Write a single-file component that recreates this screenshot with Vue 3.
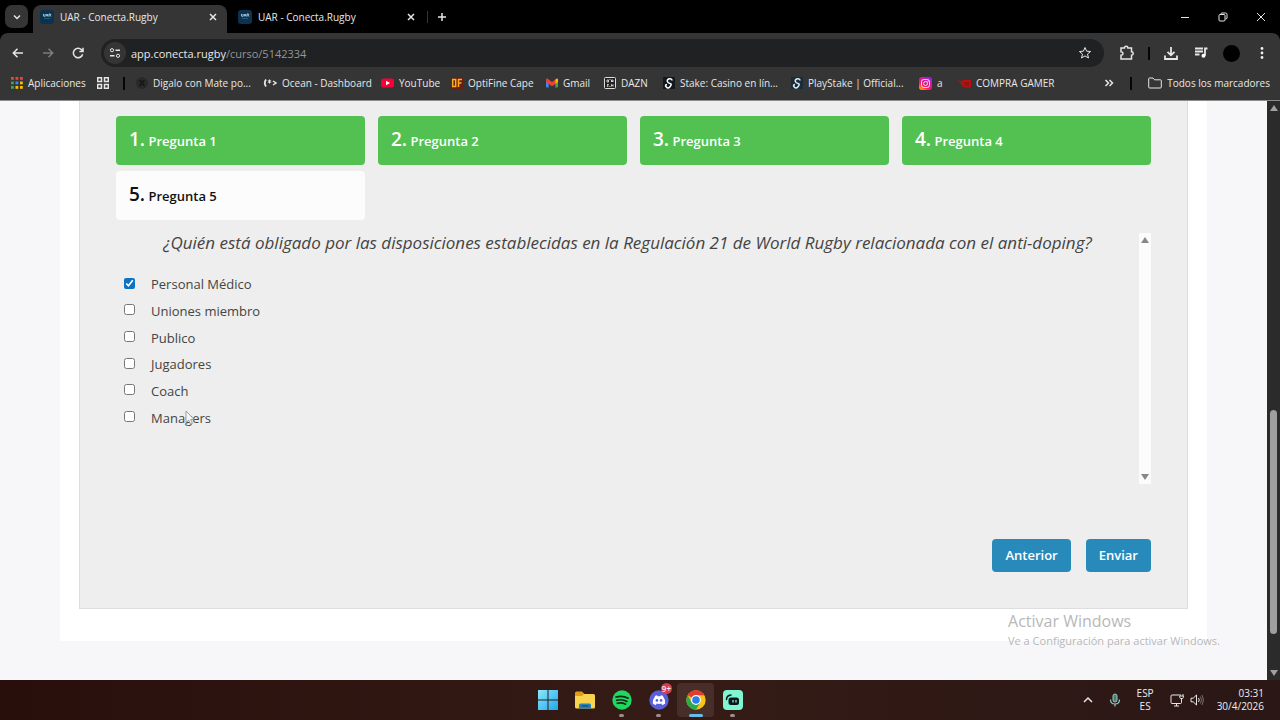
<script setup>
import { ref } from 'vue'

const tabs = [
  { id: 1, title: 'UAR - Conecta.Rugby', active: true },
  { id: 2, title: 'UAR - Conecta.Rugby', active: false }
]

const questions = [
  { n: 1, done: true },
  { n: 2, done: true },
  { n: 3, done: true },
  { n: 4, done: true },
  { n: 5, done: false }
]

const options = ref([
  { label: 'Personal Médico', checked: true },
  { label: 'Uniones miembro', checked: false },
  { label: 'Publico', checked: false },
  { label: 'Jugadores', checked: false },
  { label: 'Coach', checked: false },
  { label: 'Managers', checked: false }
])

const appDots = ['#e8453c', '#e8453c', '#e8453c', '#34a853', '#4285f4', '#fbbc05', '#34a853', '#fbbc05', '#fbbc05']
</script>

<template>
  <div class="desktop">
    <header class="browser">
      <div class="tabstrip">
        <button class="tab-search" aria-label="Buscar pestañas">
          <svg width="10" height="10" viewBox="0 0 10 10"><path d="M2 3.5l3 3 3-3" class="line bold" /></svg>
        </button>
        <div v-for="t in tabs" :key="t.id" class="tab" :class="{ active: t.active }">
          <svg class="favicon" width="14" height="14" viewBox="0 0 14 14">
            <rect width="14" height="14" rx="3" fill="#0b3350" />
            <path d="M3.5 4v1.6q0 .8.8.8t.8-.8V4M6 6.5L7 4l1 2.500M9 6.500V4h1q.8 0 .8.7t-.8.7l.9 1.100" fill="none" stroke="#dcebf5" stroke-width=".8" />
            <path d="M4 8.500h6" stroke="#2d6d94" stroke-width=".7" />
          </svg>
          <span class="tab-title">{{ t.title }}</span>
          <button class="tab-close" aria-label="Cerrar">
            <svg width="10" height="10" viewBox="0 0 10 10"><path d="M2 2l6 6M8 2l-6 6" class="line bold" /></svg>
          </button>
        </div>
        <span class="tab-sep"></span>
        <button class="new-tab" aria-label="Nueva pestaña">
          <svg width="10" height="10" viewBox="0 0 10 10"><path d="M5 1v8M1 5h8" class="line bold" /></svg>
        </button>
        <div class="win-controls">
          <button aria-label="Minimizar"><svg width="10" height="10" viewBox="0 0 10 10"><path d="M1 5.500h8" class="line" /></svg></button>
          <button aria-label="Restaurar"><svg width="10" height="10" viewBox="0 0 10 10"><rect x="1" y="2.500" width="6" height="6.500" rx="1" class="line" /><path d="M3 2.500V1.800Q3 1 4 1h3.500Q9 1 9 2.500V6q0 1-1.500 1" class="line" /></svg></button>
          <button aria-label="Cerrar ventana"><svg width="10" height="10" viewBox="0 0 10 10"><path d="M1 1l8 8M9 1l-8 8" class="line" /></svg></button>
        </div>
      </div>

      <div class="toolbar">
        <button class="nav" aria-label="Atrás"><svg width="14" height="14" viewBox="0 0 14 14"><path d="M12 7H2.500M6.500 2.800L2.300 7l4.200 4.200" class="line bold" /></svg></button>
        <button class="nav dim" aria-label="Adelante"><svg width="14" height="14" viewBox="0 0 14 14"><path d="M2 7h9.500M7.500 2.800L11.700 7l-4.200 4.200" class="line bold" /></svg></button>
        <button class="nav" aria-label="Recargar"><svg width="14" height="14" viewBox="0 0 14 14"><path d="M11.600 8.200A4.700 4.700 0 1 1 10.500 3.800L11.800 5.200M12 1.800v3.600H8.400" class="line bold" /></svg></button>
        <div class="omnibox">
          <button class="site-info" aria-label="Información del sitio">
            <svg width="12" height="12" viewBox="0 0 12 12"><circle cx="3" cy="3.200" r="1.600" class="line" /><path d="M6.500 3.200H11M1 8.800h4.500" class="line bold" /><circle cx="9" cy="8.800" r="1.600" class="line" /></svg>
          </button>
          <span class="url">app.conecta.rugby<span class="path">/curso/5142334</span></span>
          <button class="star" aria-label="Agregar a marcadores"><svg width="14" height="14" viewBox="0 0 14 14"><path d="M7 1.500l1.600 3.700 4 .3-3.100 2.600 1 3.900L7 9.900 3.500 12l1-3.900L1.400 5.500l4-.3z" class="line" /></svg></button>
        </div>
        <div class="tools">
          <button aria-label="Extensiones"><svg width="16" height="16" viewBox="0 0 16 16"><path d="M2 3h3.500a1.700 1.700 0 0 1 3.400 0H12.500V6.800a1.700 1.700 0 0 1 0 3.400V14H2v-3.800q2-.2 2-1.700T2 6.800z" class="line bold" /></svg></button>
          <span class="divider"></span>
          <button aria-label="Descargas"><svg width="16" height="16" viewBox="0 0 16 16"><path d="M8 2v8M4.500 6.800L8 10.300l3.500-3.500M2 10.500V14h12v-3.500" class="line heavy" /></svg></button>
          <button aria-label="Multimedia"><svg width="16" height="16" viewBox="0 0 16 16"><path d="M2 3.500h8M2 6.500h8M2 9.500h4.500M12 10.500V3.500h2.500" class="line heavy" /><circle cx="10.500" cy="10.800" r="2" fill="#fff" /></svg></button>
          <button aria-label="Perfil"><span class="avatar"></span></button>
          <button aria-label="Menú"><svg width="16" height="16" viewBox="0 0 16 16" fill="#eee"><circle cx="8" cy="3.500" r="1.400" /><circle cx="8" cy="8" r="1.400" /><circle cx="8" cy="12.500" r="1.400" /></svg></button>
        </div>
      </div>

      <nav class="bookmarks">
        <a href="#"><svg width="12" height="12" viewBox="0 0 12 12"><rect v-for="(c, i) in appDots" :key="i" :x="(i % 3) * 4.500" :y="Math.floor(i / 3) * 4.500" width="2.800" height="2.800" :fill="c" /></svg>Aplicaciones</a>
        <a href="#" aria-label="Grupos"><svg width="12" height="12" viewBox="0 0 12 12"><path d="M.7.7h3.800v3.800H.7zM7.500.7h3.800v3.800H7.500zM.7 7.500h3.800v3.800H.7zM7.500 7.500h3.800v3.800H7.500z" class="line bold" /></svg></a>
        <span class="divider"></span>
        <a href="#"><svg width="12" height="12" viewBox="0 0 12 12"><circle cx="6" cy="6" r="6" fill="#292929" /><path d="M3.500 3l2.500 3 2.500-3M3.500 9L6 6l2.500 3" fill="none" stroke="#161616" stroke-width="1.500" /></svg>Digalo con Mate po...</a>
        <a href="#"><svg width="14" height="12" viewBox="0 0 14 12"><path d="M3 2.500q-2.500 3.500 0 7" class="line heavy" /><path d="M6.500 2.500v4M4.800 3.500l3.400 2M8.200 3.500l-3.400 2" class="line" /><path d="M10 4l3 2-3 2" class="line bold" /></svg>Ocean - Dashboard</a>
        <a href="#"><svg width="13" height="12" viewBox="0 0 13 12"><rect y="1.500" width="13" height="9" rx="2.500" fill="#f50038" /><path d="M5 3.800L9 6 5 8.200z" fill="#fff" /></svg>YouTube</a>
        <a href="#"><svg width="12" height="12" viewBox="0 0 12 12"><rect width="12" height="12" fill="#651f12" /><path d="M1.700 2.500h3v7h-3zM7.500 10V2.500h3.500M7.500 6h3" fill="none" stroke="#ffae1c" stroke-width="1.500" /></svg>OptiFine Cape</a>
        <a href="#"><svg width="12" height="12" viewBox="0 0 12 12"><path d="M0 3h2.700v7.500H1q-1 0-1-1z" fill="#4285f4" /><path d="M9.300 3H12v6.500q0 1-1 1H9.300z" fill="#34a853" /><path d="M9.300 2.500Q12 .5 12 3v2L9.300 7z" fill="#fbbc04" /><path d="M0 3q0-2.500 2.700-.5L6 5l3.300-2.500V7L6 9.300 2.700 7 0 5z" fill="#ea4335" /></svg>Gmail</a>
        <a href="#"><svg width="12" height="12" viewBox="0 0 12 12"><rect x=".5" y=".5" width="11" height="11" rx="1" fill="#222" stroke="#ddd" /><path d="M3 3h1.500v2H3zM7.500 5V3h1.500v2M7.500 4.500H9M3 7.500h1.500L3 9.300h1.500M7.500 9.500v-2L9 9.300V7.300M6 2v1M6 9v1" fill="none" stroke="#ddd" stroke-width=".9" /></svg>DAZN</a>
        <a href="#"><svg width="12" height="12" viewBox="0 0 12 12"><rect width="12" height="12" fill="#11191f" /><path d="M9 3.500Q8.800 1.500 6.500 1.800 4 2.200 4.300 4.200T7 6.500t0 3.300-4.500-1Q2.500 7.500 4 7.500" fill="none" stroke="#fff" stroke-width="1.500" /></svg>Stake: Casino en lín...</a>
        <a href="#"><svg width="12" height="12" viewBox="0 0 12 12"><rect width="12" height="12" fill="#1a2c38" /><path d="M9 3.500Q8.800 1.500 6.500 1.800 4 2.200 4.300 4.200T7 6.500t0 3.300-4.500-1Q2.500 7.500 4 7.500" fill="none" stroke="#dcebf2" stroke-width="1.500" /></svg>PlayStake | Official...</a>
        <a href="#">
          <svg width="13" height="13" viewBox="0 0 13 13">
            <defs><linearGradient id="insta" x1="0" y1="1" x2=".7" y2="0"><stop offset="0" stop-color="#ffc400" /><stop offset=".4" stop-color="#ff1764" /><stop offset="1" stop-color="#a31be8" /></linearGradient></defs>
            <rect width="13" height="13" rx="3" fill="url(#insta)" /><rect x="2.500" y="2.500" width="8" height="8" rx="2.300" class="line" /><circle cx="6.500" cy="6.500" r="2" class="line" /><circle cx="9" cy="4" r=".6" fill="#fff" />
          </svg>a</a>
        <a href="#"><svg width="14" height="12" viewBox="0 0 14 12"><path d="M0 2.500l4.500 1.500L8 2.800h6V10.500H8.500L4.500 9 6 8 2.500 6.500 4 5.500z" fill="#b5120f" /><path d="M7 6h5M8 8h4" stroke="#5d1614" stroke-width=".8" /></svg>COMPRA GAMER</a>
        <div class="more">
          <button aria-label="Más marcadores"><svg width="10" height="10" viewBox="0 0 10 10"><path d="M1.500 2l3 3-3 3M5.500 2l3 3-3 3" class="line bold" /></svg></button>
          <span class="divider"></span>
          <a href="#"><svg width="14" height="12" viewBox="0 0 14 12"><path d="M.7 10V1.700q0-.7.700-.7H5l1.500 1.800h6q.8 0 .8.700V10q0 1-1 1H1.700q-1 0-1-1z" class="line" /></svg>Todos los marcadores</a>
        </div>
      </nav>
    </header>

    <div class="viewport">
      <main class="page">
        <div class="sheet">
          <section class="quiz">
            <div class="cards">
              <button v-for="q in questions" :key="q.n" class="card" :class="{ done: q.done }">
                <span class="num">{{ q.n }}.</span> Pregunta {{ q.n }}
              </button>
            </div>
            <div class="question">
              <div class="question-body">
                <h1>¿Quién está obligado por las disposiciones establecidas en la Regulación 21 de World Rugby relacionada con el anti-doping?</h1>
                <ul class="options">
                  <li v-for="o in options" :key="o.label">
                    <label><input v-model="o.checked" type="checkbox" />{{ o.label }}</label>
                  </li>
                </ul>
              </div>
              <div class="inner-scroll"><span class="up"></span><span class="down"></span></div>
            </div>
            <div class="actions">
              <button>Anterior</button>
              <button>Enviar</button>
            </div>
          </section>
        </div>
      </main>
      <div class="page-scroll"><span class="up"></span><div class="track"><span class="thumb"></span></div><span class="down"></span></div>
    </div>

    <footer class="taskbar">
      <div class="apps">
        <button aria-label="Inicio">
          <svg width="20" height="20" viewBox="0 0 20 20"><defs><linearGradient id="win" x2="1" y2="1"><stop stop-color="#8be8fb" /><stop offset="1" stop-color="#1ea8ee" /></linearGradient></defs><path d="M0 0h9.500v9.500H0zM10.500 0H20v9.500h-9.500zM0 10.500h9.500V20H0zM10.500 10.500H20V20h-9.500z" fill="url(#win)" /></svg>
        </button>
        <button aria-label="Explorador de archivos">
          <svg width="20" height="20" viewBox="0 0 20 20"><path d="M0 3q0-1.500 1.500-1.500H7L9.500 4H18v5H0z" fill="#e29c1a" /><path d="M0 6h7l2-2h9.500Q20 4 20 5.500V17q0 1.500-1.500 1.500h-17Q0 18.500 0 17z" fill="#f8d34d" /><path d="M4 18.500V15q0-1.500 1.500-1.500h9Q16 13.500 16 15v3.500z" fill="#2680bd" /><path d="M6.500 16h7" stroke="#135580" stroke-width="1.500" /></svg>
        </button>
        <button aria-label="Spotify" class="open">
          <svg width="20" height="20" viewBox="0 0 20 20"><circle cx="10" cy="10" r="9.700" fill="#20d760" /><path d="M4 7q6.500-1.900 12.200 1.200M4.700 10.300q5.500-1.500 10.300 1.100M5.300 13.300q4.500-1.200 8.300.9" fill="none" stroke="#102817" stroke-width="1.700" stroke-linecap="round" /></svg>
        </button>
        <button aria-label="Discord" class="open">
          <svg width="20" height="20" viewBox="0 0 20 20"><circle cx="10" cy="10" r="9.700" fill="#5a60dc" /><path d="M6.300 5.700l1.700-.5.7 1.100q1.300-.2 2.600 0l.7-1.100 1.700.5q2.800 3.800 2.500 7.800-1.400 1.100-3.100 1.400l-.8-1.300q-2.300.6-4.600 0l-.8 1.300q-1.700-.3-3.100-1.400-.3-4 2.500-7.800z" fill="#fff" /><circle cx="7.900" cy="10.400" r="1.300" fill="#5a60dc" /><circle cx="12.100" cy="10.400" r="1.300" fill="#5a60dc" /></svg>
          <span class="badge">9+</span>
        </button>
        <button aria-label="Google Chrome" class="open current">
          <svg width="20" height="20" viewBox="0 0 20 20"><circle cx="10" cy="10" r="9.700" fill="#fbc116" /><path d="M10 10L1.600 5.150A9.700 9.700 0 0 1 18.400 5.150H10z" fill="#e33b2e" /><path d="M1.600 5.150A9.700 9.700 0 0 0 10 19.700L14.200 12.400 10 10 5.800 12.400z" fill="#2da94f" /><circle cx="10" cy="10" r="4.900" fill="#fff" /><circle cx="10" cy="10" r="3.800" fill="#2b7de9" /></svg>
        </button>
        <button aria-label="Streamlabs" class="open">
          <svg width="20" height="20" viewBox="0 0 20 20"><rect width="20" height="20" rx="4" fill="#80f5d2" /><rect x="5.500" y="7.500" width="10.500" height="7.500" rx="2.500" fill="#09161d" /><path d="M3.500 9.500Q3.500 5.500 8 5" fill="none" stroke="#09161d" stroke-width="1.500" stroke-linecap="round" /><path d="M10 10v2.500M13 10v2.500" stroke="#80f5d2" stroke-width="1.300" /></svg>
        </button>
      </div>
      <div class="tray">
        <svg width="10" height="10" viewBox="0 0 10 10"><path d="M1 7l4-4 4 4" class="line bold" /></svg>
        <svg width="12" height="14" viewBox="0 0 12 14"><rect x="4" y="1" width="4" height="8" rx="2" fill="#477f78" stroke="#92c9c0" /><path d="M1.500 6.500Q1.500 11 6 11t4.500-4.500M6 11v2.500" fill="none" stroke="#92c9c0" stroke-width="1.200" /></svg>
        <div class="lang"><span>ESP</span><span>ES</span></div>
        <div class="status">
          <svg width="14" height="14" viewBox="0 0 14 14"><path d="M9 2H2Q1 2 1 3v6.500q0 1 1 1h8.500q1 0 1-1V7M4 13h5M6.500 10.500V13" class="line" /><path d="M10 1v2M13 1v2M9.700 3h3.600v1.500q0 1-1 1h-1.500q-1 0-1-1zM11.500 5.500V8" class="line" /></svg>
          <svg width="14" height="14" viewBox="0 0 14 14"><path d="M1 5.200h2.200L6.500 2v10L3.200 8.800H1zM8.500 5q1.500 2 0 4" class="line" /><path d="M10.300 3.500q2.500 3.500 0 7M12 2q3 5 0 10" class="line faint" /></svg>
        </div>
        <div class="clock"><span>03:31</span><span>30/4/2026</span></div>
      </div>
    </footer>

    <div class="watermark"><strong>Activar Windows</strong><span>Ve a Configuración para activar Windows.</span></div>
    <svg class="pointer" width="10" height="16" viewBox="0 0 10 16"><path d="M1 1v11.500l2.700-2.300 1.800 4 2-.9-1.800-3.800h3.500z" fill="#f5f5f5" stroke="#8a8a8a" stroke-width=".8" /></svg>
  </div>
</template>

<style>
body {
  margin: 0;
}
</style>

<style scoped>
.desktop {
  position: relative;
  height: 100vh;
  display: flex;
  flex-direction: column;
  overflow: hidden;
  font-family: "Open Sans", "Noto Sans", sans-serif;
  color: #444;
}
.desktop * {
  box-sizing: border-box;
}
button {
  border: 0;
  padding: 0;
  margin: 0;
  background: none;
  font: inherit;
  color: inherit;
}
svg {
  display: block;
  flex: none;
}
.line {
  fill: none;
  stroke: #e6e6e6;
  stroke-width: 1;
}
.bold {
  stroke-width: 1.500;
}
.heavy {
  stroke-width: 1.800;
}
.faint {
  stroke: #77706e;
}

/* Browser chrome */
.browser {
  flex: none;
  background: #000;
  color: #e8e8e8;
  font-size: 10px;
}
.tabstrip {
  display: flex;
  align-items: center;
  height: 33px;
}
.tab-search {
  display: grid;
  place-items: center;
  width: 23px;
  height: 23px;
  margin: 0 5px;
  border-radius: 7px;
  background: #353535;
}
.tab {
  display: flex;
  align-items: center;
  gap: 6px;
  width: 198px;
  height: 28px;
  align-self: flex-end;
  padding: 0 9px 5px 5px;
}
.tab.active {
  width: 194px;
  padding-left: 7px;
  background: #353535;
  border-radius: 8px 8px 0 0;
}
.tab:not(.active) {
  padding-left: 11px;
}
.tab-title {
  flex: 1;
  white-space: nowrap;
}
.tab-sep {
  width: 1px;
  height: 12px;
  margin: 0 9px 0 2px;
  background: #333;
}
.win-controls {
  display: flex;
  gap: 28px;
  margin-left: auto;
  padding-right: 14px;
}
.toolbar {
  display: flex;
  align-items: center;
  height: 38px;
  padding: 2px 10px 0 11px;
  background: #353535;
  border-radius: 8px 8px 0 0;
}
.nav {
  margin-right: 16px;
}
.dim {
  opacity: 0.4;
}
.omnibox {
  flex: 1;
  display: flex;
  align-items: center;
  height: 28px;
  padding: 0 12px 0 3px;
  border-radius: 14px;
  background: #202122;
  font-size: 11px;
}
.site-info {
  display: grid;
  place-items: center;
  width: 22px;
  height: 22px;
  margin-right: 5px;
  border-radius: 50%;
  background: #353535;
}
.url {
  flex: 1;
}
.path {
  color: #969696;
}
.tools {
  display: flex;
  align-items: center;
  gap: 14px;
  margin-left: 15px;
}
.tools .divider {
  margin: 0 -1px;
}
.divider {
  width: 2px;
  height: 13px;
  background: #050505;
}
.avatar {
  display: block;
  width: 17px;
  height: 17px;
  border-radius: 50%;
  background: #000;
}
.bookmarks {
  display: grid;
  grid-template-columns: 86px 26px 13px 127px 118px 70px 95px 58px 59px 128px 128px 38px 100px 1fr;
  align-items: center;
  height: 29px;
  padding: 0 10px 5px 11px;
  background: #353535;
}
.bookmarks a {
  display: flex;
  align-items: center;
  gap: 5px;
  color: inherit;
  text-decoration: none;
  white-space: nowrap;
}
.more {
  display: flex;
  align-items: center;
  justify-content: flex-end;
  gap: 16px;
}

/* Page */
.viewport {
  flex: 1;
  min-height: 0;
  display: flex;
  border-top: 1px solid #8f8b8d;
}
.page {
  flex: 1;
  overflow: hidden;
  padding: 0 60px;
  background: #f7f7fa;
}
.sheet {
  padding: 0 19px 32px;
  background: #fff;
}
.quiz {
  padding: 15px 36px 16px;
  border: 1px solid #ddd;
  border-top: 0;
  background: #eee;
}
.cards {
  display: grid;
  grid-template-columns: repeat(4, 1fr);
  gap: 6px 13px;
}
.card {
  height: 49px;
  padding: 0 13px 3px;
  border-radius: 4px;
  background: #fcfcfc;
  color: #111;
  font-size: 13px;
  font-weight: 600;
  text-align: left;
}
.card.done {
  background: #53c152;
  color: #fff;
}
.num {
  font-size: 19px;
}
.question {
  display: flex;
  height: 251px;
  margin-top: 13px;
}
.question-body {
  flex: 1;
}
h1 {
  margin: 0;
  font-size: 17px;
  line-height: 20px;
  font-style: italic;
  font-weight: 400;
  text-align: center;
}
.options {
  display: grid;
  grid-auto-rows: 1fr;
  align-items: center;
  height: 160px;
  margin: 18px 0 0;
  padding: 0 0 0 8px;
  list-style: none;
  font-size: 13px;
  line-height: 18px;
}
.options label {
  display: flex;
  align-items: center;
  gap: 16px;
}
.options input {
  width: 11px;
  height: 11px;
  margin: 0 0 2px;
  accent-color: #0b72c4;
}
.inner-scroll {
  display: flex;
  flex-direction: column;
  justify-content: space-between;
  align-items: center;
  width: 12px;
  padding: 4px 0;
  background: #fcfcfc;
}
.up,
.down {
  border: 4px solid transparent;
}
.up {
  border-top: 0;
  border-bottom: 6px solid #888;
}
.down {
  border-bottom: 0;
  border-top: 6px solid #888;
}
.actions {
  display: flex;
  justify-content: flex-end;
  gap: 15px;
  margin-top: 55px;
  padding-bottom: 20px;
}
.actions button {
  height: 33px;
  padding: 0 13px 2px;
  border-radius: 4px;
  background: #288abb;
  color: #fff;
  font-size: 13px;
  font-weight: 600;
}
.page-scroll {
  display: flex;
  flex-direction: column;
  align-items: center;
  width: 13px;
  padding: 4px 0;
  background: #2b2b2b;
}
.page-scroll .up {
  border-bottom-color: #a0a0a0;
}
.page-scroll .down {
  border-top-color: #a0a0a0;
}
.track {
  flex: 1;
  width: 7px;
}
.thumb {
  display: block;
  height: 40%;
  margin-top: 299px;
  border-radius: 4px;
  background: #9f9f9f;
}

/* Taskbar */
.taskbar {
  flex: none;
  display: grid;
  grid-template-columns: 1fr auto 1fr;
  align-items: center;
  height: 40px;
  background: linear-gradient(90deg, #280f0c, #351b15 50%, #2a1716);
  color: #eee;
}
.apps {
  grid-column: 2;
  display: flex;
}
.apps button {
  position: relative;
  display: grid;
  place-items: center;
  width: 37px;
  height: 34px;
}
.apps .open::after {
  content: "";
  position: absolute;
  bottom: 0;
  width: 5px;
  height: 3px;
  border-radius: 2px;
  background: #a08d88;
}
.apps .current {
  border-radius: 4px;
  background: #482e29;
}
.apps .current::after {
  width: 14px;
  background: #66bde8;
}
.badge {
  position: absolute;
  top: 0;
  right: 5px;
  padding: 0 1px;
  border-radius: 6px;
  background: #d93c4c;
  font-size: 8px;
  line-height: 11px;
  font-weight: 600;
}
.tray {
  display: flex;
  align-items: center;
  justify-content: flex-end;
  gap: 16px;
  padding-right: 16px;
  font-size: 10px;
  line-height: 13px;
}
.lang,
.clock {
  display: flex;
  flex-direction: column;
  align-items: center;
}
.clock {
  align-items: flex-end;
  margin-left: -3px;
}
.status {
  display: flex;
  gap: 6px;
}

.watermark {
  position: absolute;
  right: 60px;
  bottom: 70px;
  display: flex;
  flex-direction: column;
  color: #b8b8b8;
  font-size: 11px;
  line-height: 18px;
}
.watermark strong {
  font-size: 16px;
  line-height: 22px;
  font-weight: 400;
}
.pointer {
  position: absolute;
  left: 185px;
  top: 410px;
}
</style>
